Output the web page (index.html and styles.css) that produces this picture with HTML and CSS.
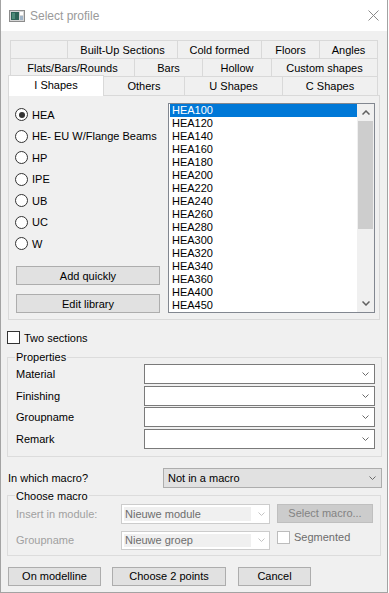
FILE: index.html
```html
<!DOCTYPE html>
<html lang="en">
<head>
    <meta charset="UTF-8">
    <meta name="viewport" content="width=device-width, initial-scale=1.0">
    <title>Select profile</title>
    <link rel="stylesheet" href="styles.css">
</head>
<body>

    <div class="window">
        <!-- Title bar -->
        <div class="titlebar">
            <svg class="app-icon" width="16" height="12" viewBox="0 0 16 12">
                <rect x="0.5" y="0.5" width="15" height="11" fill="#d6d6d6" stroke="#8c8c8c"/>
                <rect x="2" y="2" width="8" height="8" fill="#2d6356"/>
                <rect x="3" y="3" width="3" height="6" fill="#4d8a78"/>
                <rect x="11" y="2" width="3" height="3" fill="#ffffff"/>
                <rect x="11" y="6" width="3" height="4" fill="#9fb4c8"/>
            </svg>
            <span class="title">Select profile</span>
            <svg class="close" width="11" height="11" viewBox="0 0 11 11">
                <path d="M0.5 0.5 L10.5 10.5 M10.5 0.5 L0.5 10.5" stroke="#8a8a8a" stroke-width="1"/>
            </svg>
        </div>

        <div class="dialog">
            <!-- Tab control -->
            <div class="tabs">
                <div class="tab-row">
                    <div class="tab t-blank"></div>
                    <div class="tab t-built">Built-Up Sections</div>
                    <div class="tab t-cold">Cold formed</div>
                    <div class="tab t-floors">Floors</div>
                    <div class="tab t-angles">Angles</div>
                </div>
                <div class="tab-row">
                    <div class="tab t-flats">Flats/Bars/Rounds</div>
                    <div class="tab t-bars">Bars</div>
                    <div class="tab t-hollow">Hollow</div>
                    <div class="tab t-custom">Custom shapes</div>
                </div>
                <div class="tab-row front">
                    <div class="tab active">I Shapes</div>
                    <div class="tab t-others">Others</div>
                    <div class="tab t-u">U Shapes</div>
                    <div class="tab t-c">C Shapes</div>
                </div>

                <div class="panel">
                    <div class="profile-col">
                        <div class="radios">
                            <div class="radio-row"><span class="radio on"></span>HEA</div>
                            <div class="radio-row"><span class="radio"></span>HE- EU W/Flange Beams</div>
                            <div class="radio-row"><span class="radio"></span>HP</div>
                            <div class="radio-row"><span class="radio"></span>IPE</div>
                            <div class="radio-row"><span class="radio"></span>UB</div>
                            <div class="radio-row"><span class="radio"></span>UC</div>
                            <div class="radio-row"><span class="radio"></span>W</div>
                        </div>
                        <div class="btn-group">
                            <button class="btn">Add quickly</button>
                            <button class="btn">Edit library</button>
                        </div>
                    </div>

                    <div class="listbox">
                        <div class="items">
                            <div class="item sel">HEA100</div>
                            <div class="item">HEA120</div>
                            <div class="item">HEA140</div>
                            <div class="item">HEA160</div>
                            <div class="item">HEA180</div>
                            <div class="item">HEA200</div>
                            <div class="item">HEA220</div>
                            <div class="item">HEA240</div>
                            <div class="item">HEA260</div>
                            <div class="item">HEA280</div>
                            <div class="item">HEA300</div>
                            <div class="item">HEA320</div>
                            <div class="item">HEA340</div>
                            <div class="item">HEA360</div>
                            <div class="item">HEA400</div>
                            <div class="item">HEA450</div>
                        </div>
                        <div class="scrollbar">
                            <div class="sb-btn">
                                <svg width="8" height="5" viewBox="0 0 8 5"><polyline points="0.5,4.5 4,1 7.5,4.5" fill="none" stroke="#606060" stroke-width="1.5"/></svg>
                            </div>
                            <div class="sb-track"><div class="thumb"></div></div>
                            <div class="sb-btn">
                                <svg width="8" height="5" viewBox="0 0 8 5"><polyline points="0.5,0.5 4,4 7.5,0.5" fill="none" stroke="#606060" stroke-width="1.5"/></svg>
                            </div>
                        </div>
                    </div>
                </div>
            </div>

            <div class="check-row">
                <span class="checkbox"></span>Two sections
            </div>

            <!-- Properties -->
            <fieldset class="group props">
                <legend>Properties</legend>
                <div class="prop-grid">
                    <span>Material</span>
                    <div class="combo"><svg class="chev" width="7" height="4" viewBox="0 0 7 4"><polyline points="0.5,0.5 3.5,3.5 6.5,0.5" fill="none" stroke="#6b6b6b"/></svg></div>
                    <span>Finishing</span>
                    <div class="combo"><svg class="chev" width="7" height="4" viewBox="0 0 7 4"><polyline points="0.5,0.5 3.5,3.5 6.5,0.5" fill="none" stroke="#6b6b6b"/></svg></div>
                    <span>Groupname</span>
                    <div class="combo"><svg class="chev" width="7" height="4" viewBox="0 0 7 4"><polyline points="0.5,0.5 3.5,3.5 6.5,0.5" fill="none" stroke="#6b6b6b"/></svg></div>
                    <span>Remark</span>
                    <div class="combo"><svg class="chev" width="7" height="4" viewBox="0 0 7 4"><polyline points="0.5,0.5 3.5,3.5 6.5,0.5" fill="none" stroke="#6b6b6b"/></svg></div>
                </div>
            </fieldset>

            <!-- Macro -->
            <div class="macro-row">
                <span>In which macro?</span>
                <div class="combo drop">
                    <span>Not in a macro</span>
                    <svg class="chev" width="7" height="4" viewBox="0 0 7 4"><polyline points="0.5,0.5 3.5,3.5 6.5,0.5" fill="none" stroke="#6b6b6b"/></svg>
                </div>
            </div>

            <fieldset class="group macro">
                <legend>Choose macro</legend>
                <div class="macro-grid">
                    <span class="disabled">Insert in module:</span>
                    <div class="combo off">
                        <span class="field">Nieuwe module</span>
                        <svg class="chev" width="7" height="4" viewBox="0 0 7 4"><polyline points="0.5,0.5 3.5,3.5 6.5,0.5" fill="none" stroke="#c4c4c4"/></svg>
                    </div>
                    <button class="btn off">Select macro...</button>

                    <span class="disabled">Groupname</span>
                    <div class="combo off">
                        <span class="field">Nieuwe groep</span>
                        <svg class="chev" width="7" height="4" viewBox="0 0 7 4"><polyline points="0.5,0.5 3.5,3.5 6.5,0.5" fill="none" stroke="#c4c4c4"/></svg>
                    </div>
                    <div class="seg">
                        <span class="checkbox off"></span>Segmented
                    </div>
                </div>
            </fieldset>

            <!-- Dialog buttons -->
            <div class="actions">
                <button class="btn b-model">On modelline</button>
                <button class="btn b-points">Choose 2 points</button>
                <button class="btn b-cancel">Cancel</button>
            </div>
        </div>
    </div>

</body>
</html>
```

FILE: styles.css
```css
/* Classic Windows dialog look */
* {
    box-sizing: border-box;
}

body {
    margin: 0;
    background-color: #fff;
    font-family: "Liberation Sans", Arial, sans-serif;
    font-size: 11px;
    color: #000;
}

.window {
    width: 388px;
    height: 593px;
    background-color: #f0f0f0;
    border: 1px solid #a3a3a3;
    border-top: none;
}

/* Title bar */
.titlebar {
    height: 31px;
    background-color: #fff;
    display: flex;
    align-items: center;
    padding: 0 8px;
}

.title {
    margin-left: 5px;
    font-size: 12px;
    color: #9a9a9a;
}

.close {
    margin-left: auto;
}

.dialog {
    padding: 9px 5px 0 6px;
}

/* Tabs */
.tabs {
    margin: 0 2px 0 1px;
}

.tab-row {
    display: flex;
    margin: 0 2px;
}

.tab {
    height: 18px;
    border: 1px solid #d9d9d9;
    border-left: none;
    border-bottom: none;
    background-color: #f0f0f0;
    display: flex;
    align-items: center;
    justify-content: center;
    white-space: nowrap;
}

.tab:first-child {
    border-left: 1px solid #d9d9d9;
}

.t-blank { width: 58px; }
.t-built { width: 110px; }
.t-cold { width: 84px; }
.t-floors { width: 58px; }
.t-angles { width: 58px; }
.t-flats { width: 125px; }
.t-bars { width: 68px; }
.t-hollow { width: 69px; }
.t-custom { width: 106px; }
.t-others { width: 81px; }
.t-u { width: 98px; }
.t-c { width: 95px; }

.tab-row.front {
    height: 19px;
    align-items: flex-start;
}

.tab-row.front .tab {
    height: 19px;
}

.tab-row.front .tab.active {
    width: 96px;
    height: 21px;
    margin: -1px 0 0 -2px;
    padding-bottom: 2px;
    background-color: #fff;
    position: relative;
    z-index: 1;
}

.panel {
    height: 225px;
    border: 1px solid #d9d9d9;
    background-color: #f0f0f0;
    padding: 7px 4px 6px 6px;
    display: grid;
    grid-template-columns: 145px 207px;
    column-gap: 8px;
}

/* Radio list + buttons */
.profile-col {
    display: flex;
    flex-direction: column;
}

.radios {
    margin-top: 1px;
}

.radio-row {
    height: 21.5px;
    display: flex;
    align-items: center;
    white-space: nowrap;
}

.radio {
    width: 13px;
    height: 13px;
    border: 1px solid #333;
    border-radius: 50%;
    background-color: #fff;
    margin-right: 4px;
    display: flex;
    align-items: center;
    justify-content: center;
}

.radio.on::after {
    content: "";
    width: 6px;
    height: 6px;
    border-radius: 50%;
    background-color: #333;
}

.btn-group {
    margin-top: auto;
    padding-left: 1px;
    display: flex;
    flex-direction: column;
    gap: 9px;
}

.btn {
    height: 19px;
    padding: 0;
    background-color: #e1e1e1;
    border: 1px solid #adadad;
    font-family: inherit;
    font-size: 11px;
    color: #000;
    display: flex;
    align-items: center;
    justify-content: center;
    white-space: nowrap;
}

/* List box */
.listbox {
    height: 210px;
    background-color: #fff;
    border: 1px solid #828790;
    display: flex;
    overflow: hidden;
}

.items {
    flex: 1;
    padding-left: 1px;
    overflow: hidden;
}

.item {
    height: 13px;
    line-height: 13px;
    padding-left: 2px;
}

.item.sel {
    background-color: #0078d7;
    color: #fff;
}

.scrollbar {
    width: 17px;
    background-color: #f0f0f0;
    display: flex;
    flex-direction: column;
}

.sb-btn {
    height: 17px;
    display: flex;
    align-items: center;
    justify-content: center;
}

.sb-track {
    flex: 1;
}

.thumb {
    height: 108px;
    margin: 0 1px;
    background-color: #cdcdcd;
}

/* Checkboxes */
.check-row {
    margin-top: 11px;
    height: 13px;
    display: flex;
    align-items: center;
}

.checkbox {
    width: 13px;
    height: 13px;
    border: 1px solid #333;
    background-color: #fff;
    margin-right: 4px;
}

.checkbox.off {
    border-color: #bcbcbc;
}

/* Group boxes */
.group {
    margin: 0;
    border: 1px solid #dcdcdc;
    min-width: 0;
}

.group legend {
    padding: 0 1px;
    margin-left: -1px;
    line-height: 12px;
}

.props {
    margin-top: 7px;
    padding: 1px 6px 7px 8px;
}

.prop-grid {
    display: grid;
    grid-template-columns: 128px 1fr;
    grid-auto-rows: 20px;
    row-gap: 1.5px;
    align-items: center;
}

.combo {
    height: 20px;
    background-color: #fff;
    border: 1px solid #7a7a7a;
    display: flex;
    align-items: center;
    justify-content: flex-end;
    padding-right: 5px;
}

.macro-row {
    margin-top: 11px;
    height: 20px;
    padding-left: 1px;
    display: flex;
    align-items: center;
}

.combo.drop {
    width: 219px;
    margin-left: auto;
    background-color: #e1e1e1;
    border-color: #adadad;
    justify-content: space-between;
    padding-left: 4px;
}

.macro {
    margin-top: 2px;
    margin-right: 1px;
    padding: 2px 0 5px 8px;
}

.macro-grid {
    display: grid;
    grid-template-columns: 105px 149px 1fr;
    grid-template-rows: 20px 19px;
    row-gap: 7px;
    align-items: center;
}

.disabled {
    color: #a0a0a0;
}

.combo.off {
    height: 100%;
    border-color: #cccccc;
    padding: 2px 4px 2px 2px;
    justify-content: space-between;
}

.combo.off .field {
    width: 127px;
    height: 100%;
    background-color: #f0f0f0;
    padding-left: 1px;
    color: #6d6d6d;
    display: flex;
    align-items: center;
}

.btn.off {
    width: 96px;
    margin-left: 7px;
    align-self: start;
    background-color: #cccccc;
    border-color: #bfbfbf;
    color: #838383;
}

.seg {
    margin-left: 7px;
    align-self: start;
    display: flex;
    align-items: center;
    color: #6d6d6d;
}

/* Bottom buttons */
.actions {
    margin-top: 11px;
    padding-left: 1px;
    display: flex;
}

.b-model { width: 93px; }
.b-points { width: 114px; margin-left: 11px; }
.b-cancel { width: 73px; margin-left: 12px; }
```
